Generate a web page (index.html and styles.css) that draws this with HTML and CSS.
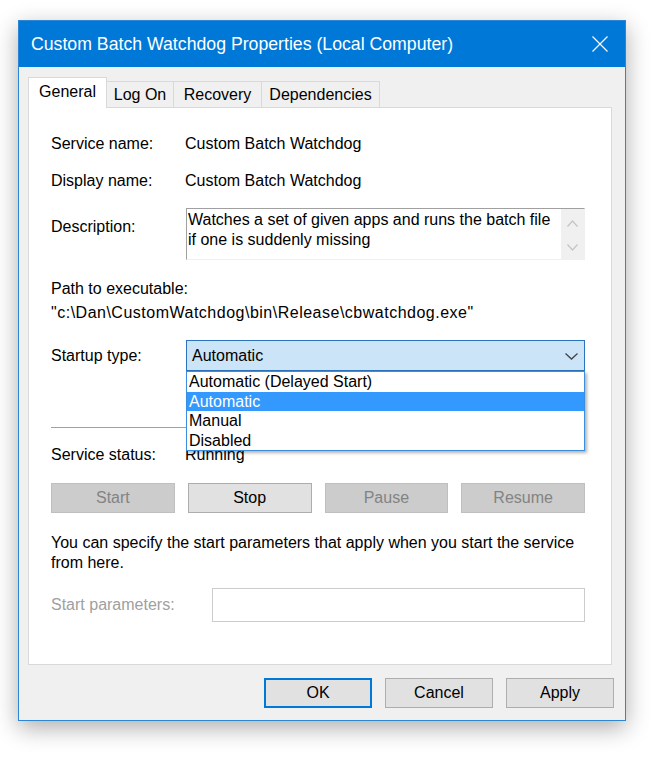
FILE: index.html
```html
<!DOCTYPE html>
<html>
<head>
<meta charset="utf-8">
<link rel="stylesheet" href="styles.css">
</head>
<body>
<div class="window">
  <div class="titlebar">
    <span class="title">Custom Batch Watchdog Properties (Local Computer)</span>
    <svg class="close" width="16" height="16" viewBox="0 0 16 16"><path d="M0.5 0.5 L15.5 15.5 M15.5 0.5 L0.5 15.5" stroke="#fff" stroke-width="1.2" fill="none"/></svg>
  </div>
  <div class="content">
    <div class="tabs">
      <div class="tab active t-general">General</div>
      <div class="tab t-logon">Log On</div>
      <div class="tab t-recovery">Recovery</div>
      <div class="tab t-deps">Dependencies</div>
    </div>
    <div class="panel">
      <div class="row">
        <span class="label">Service name:</span>
        <span class="value">Custom Batch Watchdog</span>
      </div>
      <div class="row r-display">
        <span class="label">Display name:</span>
        <span class="value">Custom Batch Watchdog</span>
      </div>
      <div class="row r-desc">
        <span class="label desc-label">Description:</span>
        <div class="descbox">
          <div class="desctext">Watches a set of given apps and runs the batch file if one is suddenly missing</div>
          <div class="vscroll">
            <svg width="11" height="7" viewBox="0 0 11 7"><path d="M0.5 6.5 L5.5 1 L10.5 6.5" stroke="#c4c4c4" stroke-width="1.2" fill="none"/></svg>
            <svg width="11" height="7" viewBox="0 0 11 7"><path d="M0.5 0.5 L5.5 6 L10.5 0.5" stroke="#c4c4c4" stroke-width="1.2" fill="none"/></svg>
          </div>
        </div>
      </div>
      <div class="path">
        <div>Path to executable:</div>
        <div class="pathval">"c:\Dan\CustomWatchdog\bin\Release\cbwatchdog.exe"</div>
      </div>
      <div class="row r-startup">
        <span class="label startup-label">Startup type:</span>
        <div class="combo-wrap">
          <div class="combo">
            <span>Automatic</span>
            <svg width="13" height="7" viewBox="0 0 13 7"><path d="M0.5 0.5 L6.5 6 L12.5 0.5" stroke="#444" stroke-width="1.3" fill="none"/></svg>
          </div>
          <ul class="dropdown">
            <li>Automatic (Delayed Start)</li>
            <li class="sel">Automatic</li>
            <li>Manual</li>
            <li>Disabled</li>
          </ul>
        </div>
      </div>
      <div class="separator"></div>
      <div class="row r-status">
        <span class="label">Service status:</span>
        <span class="value">Running</span>
      </div>
      <div class="svc-buttons">
        <button class="btn disabled">Start</button>
        <button class="btn">Stop</button>
        <button class="btn disabled">Pause</button>
        <button class="btn disabled">Resume</button>
      </div>
      <div class="note">You can specify the start parameters that apply when you start the service from here.</div>
      <div class="row r-params">
        <span class="label params-label">Start parameters:</span>
        <div class="params-input"></div>
      </div>
    </div>
    <div class="footer">
      <button class="btn fbtn default">OK</button>
      <button class="btn fbtn">Cancel</button>
      <button class="btn fbtn">Apply</button>
    </div>
  </div>
</div>
</body>
</html>
```
FILE: styles.css
```css
html, body {
  margin: 0;
  padding: 0;
  background: #ffffff;
}
body {
  font-family: "Liberation Sans", Arial, sans-serif;
  font-size: 16px;
  color: #000;
  padding: 20px 0 0 18px;
  min-height: 766px;
  box-sizing: border-box;
}
.window {
  width: 608px;
  height: 701px;
  box-sizing: border-box;
  border: 1px solid #2b86d6;
  background: #f0f0f0;
  box-shadow: 0 7px 22px rgba(0,0,0,0.32);
  display: flex;
  flex-direction: column;
}
.titlebar {
  height: 46px;
  flex: none;
  background: #0078d7;
  display: flex;
  align-items: center;
  justify-content: space-between;
  padding: 0 17px 0 12px;
}
.title {
  color: #fff;
  font-size: 17.7px;
}
.close {
  display: block;
}
.content {
  padding: 10px 13px 0 9px;
}
.tabs {
  display: flex;
  align-items: flex-end;
  height: 30px;
}
.tab {
  box-sizing: border-box;
  height: 26px;
  border: 1px solid #d9d9d9;
  border-bottom: none;
  background: #f0f0f0;
  text-align: center;
  line-height: 24px;
  padding-top: 1px;
  margin-left: -1px;
}
.tab.active {
  background: #fff;
  height: 31px;
  margin-bottom: -1px;
  margin-left: 0;
  line-height: 28px;
  padding-top: 0;
  position: relative;
  z-index: 1;
}
.t-general { width: 79px; }
.t-logon { width: 68px; }
.t-recovery { width: 89px; }
.t-deps { width: 119px; }
.panel {
  box-sizing: border-box;
  height: 558px;
  border: 1px solid #d9d9d9;
  background: #fff;
  padding: 26px 26px 0 22px;
}
.row {
  display: flex;
  align-items: flex-start;
  line-height: 20px;
}
.label {
  width: 134px;
  flex: none;
}
.r-display { margin-top: 17px; }
.r-desc { margin-top: 17px; }
.desc-label { margin-top: 9px; }
.descbox {
  flex: 1;
  margin-left: 1px;
  height: 52px;
  box-sizing: border-box;
  border-top: 1px solid #a0a0a0;
  border-left: 1px solid #a0a0a0;
  border-right: 1px solid #f0f0f0;
  border-bottom: 1px solid #f0f0f0;
  display: flex;
}
.desctext {
  flex: 1;
  padding: 1px 4px 0 1px;
  line-height: 19.5px;
}
.vscroll {
  width: 23px;
  flex: none;
  background: #f0f0f0;
  display: flex;
  flex-direction: column;
  align-items: center;
  justify-content: space-between;
  padding: 11px 0 8px;
  box-sizing: border-box;
}
.vscroll svg { display: block; }
.path {
  margin-top: 17px;
  line-height: 24px;
}
.pathval { letter-spacing: 0.5px; }
.r-startup { margin-top: 15px; }
.startup-label { line-height: 31px; }
.combo-wrap {
  flex: 1;
  margin-left: 1px;
  position: relative;
}
.combo {
  height: 31px;
  box-sizing: border-box;
  border: 1px solid #2a73bd;
  background: #cce4f7;
  display: flex;
  align-items: center;
  justify-content: space-between;
  padding: 1px 6px 0 5px;
}
.combo svg { display: block; }
.dropdown {
  position: absolute;
  top: 31px;
  left: 0;
  right: 0;
  margin: 0;
  padding: 0;
  list-style: none;
  background: #fff;
  border: 1px solid #3a8ee0;
  box-shadow: 2px 2px 3px rgba(0,0,0,0.3);
  z-index: 5;
}
.dropdown li {
  height: 19.5px;
  line-height: 20.5px;
  padding-left: 2px;
}
.dropdown li.sel {
  background: #3399ff;
  color: #fff;
}
.separator {
  margin-top: 56px;
  height: 1px;
  background: #a0a0a0;
}
.r-status { margin-top: 17px; }
.svc-buttons {
  margin-top: 18px;
  display: grid;
  grid-template-columns: repeat(4, 1fr);
  column-gap: 13px;
}
.btn {
  height: 30px;
  box-sizing: border-box;
  border: 1px solid #adadad;
  background: #e1e1e1;
  font-family: "Liberation Sans", Arial, sans-serif;
  font-size: 16px;
  color: #000;
  padding: 0;
  margin: 0;
}
.btn.disabled {
  background: #cccccc;
  border-color: #bfbfbf;
  color: #838383;
}
.note {
  margin-top: 20px;
  line-height: 20px;
}
.r-params { margin-top: 15px; }
.params-label {
  width: 161px;
  line-height: 34px;
  color: #a0a0a0;
}
.params-input {
  flex: 1;
  height: 34px;
  box-sizing: border-box;
  border: 1px solid #cccccc;
  background: #fff;
}
.footer {
  margin-top: 13px;
  display: flex;
  justify-content: flex-end;
  column-gap: 13px;
  margin-right: -2px;
}
.fbtn {
  width: 108px;
}
.fbtn.default {
  border: 2px solid #0078d7;
}
```
